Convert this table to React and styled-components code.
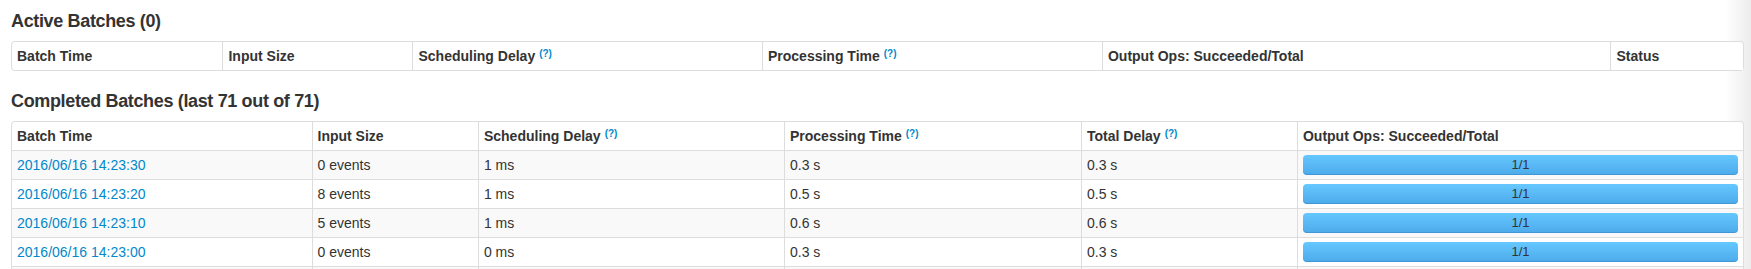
import React from 'react';
import styled, { createGlobalStyle } from 'styled-components';

const GlobalStyle = createGlobalStyle`
  html {
    overflow: hidden;
  }
  body {
    margin: 0;
    background: linear-gradient(to right, #fff calc(100% - 26px), #ececec 100%);
    font-family: "Liberation Sans", Arial, sans-serif;
    font-size: 14px;
    line-height: 20px;
    color: #333;
  }
`;

const activeCols = [
  { title: 'Batch Time', w: 12.21 },
  { title: 'Input Size', w: 10.97 },
  { title: 'Scheduling Delay', w: 20.18, tip: true },
  { title: 'Processing Time', w: 19.63, tip: true },
  { title: 'Output Ops: Succeeded/Total', w: 29.36 },
  { title: 'Status', w: 7.65 },
];

const completedCols = [
  { title: 'Batch Time', w: 17.35 },
  { title: 'Input Size', w: 9.61 },
  { title: 'Scheduling Delay', w: 17.67, tip: true },
  { title: 'Processing Time', w: 17.15, tip: true },
  { title: 'Total Delay', w: 12.47, tip: true },
  { title: 'Output Ops: Succeeded/Total', w: 25.75 },
];

const batches = [
  { time: '2016/06/16 14:23:30', input: '0 events', sched: '1 ms', proc: '0.3 s', total: '0.3 s', ops: '1/1' },
  { time: '2016/06/16 14:23:20', input: '8 events', sched: '1 ms', proc: '0.5 s', total: '0.5 s', ops: '1/1' },
  { time: '2016/06/16 14:23:10', input: '5 events', sched: '1 ms', proc: '0.6 s', total: '0.6 s', ops: '1/1' },
  { time: '2016/06/16 14:23:00', input: '0 events', sched: '0 ms', proc: '0.3 s', total: '0.3 s', ops: '1/1' },
  { time: '2016/06/16 14:22:50', input: '3 events', sched: '1 ms', proc: '0.4 s', total: '0.4 s', ops: '1/1' },
];

export default function App() {
  return (
    <Page>
      <GlobalStyle />
      <Heading>Active Batches (0)</Heading>
      <Table>
        <colgroup>
          {activeCols.map((c) => <Col key={c.title} $w={c.w} />)}
        </colgroup>
        <thead>
          <tr>
            {activeCols.map((c) => (
              <Th key={c.title}>
                {c.title}
                {c.tip && <Tip>(?)</Tip>}
              </Th>
            ))}
          </tr>
        </thead>
      </Table>

      <Heading>Completed Batches (last 71 out of 71)</Heading>
      <Table>
        <colgroup>
          {completedCols.map((c) => <Col key={c.title} $w={c.w} />)}
        </colgroup>
        <thead>
          <tr>
            {completedCols.map((c) => (
              <Th key={c.title}>
                {c.title}
                {c.tip && <Tip>(?)</Tip>}
              </Th>
            ))}
          </tr>
        </thead>
        <tbody>
          {batches.map((b) => (
            <tr key={b.time}>
              <Td><Link href="#">{b.time}</Link></Td>
              <Td>{b.input}</Td>
              <Td>{b.sched}</Td>
              <Td>{b.proc}</Td>
              <Td>{b.total}</Td>
              <Td>
                <Bar>{b.ops}</Bar>
              </Td>
            </tr>
          ))}
        </tbody>
      </Table>
    </Page>
  );
}

const Page = styled.div`
  padding: 11px 7px 0 11px;
`;

const Heading = styled.h4`
  margin: 0 0 10px;
  font-size: 18px;
  line-height: 20px;
  font-weight: bold;
  letter-spacing: -0.35px;
  color: #333;
`;

const Table = styled.table`
  width: 100%;
  table-layout: fixed;
  border-collapse: separate;
  border-spacing: 0;
  border: 1px solid #ddd;
  border-left: 0;
  border-radius: 4px;
  margin-bottom: 20px;

  tbody tr:nth-child(odd) td {
    background: #f9f9f9;
  }
  thead tr th:first-child {
    border-top-left-radius: 4px;
  }
  thead tr th:last-child {
    border-top-right-radius: 4px;
  }
  thead:last-child tr th:first-child,
  tbody tr:last-child td:first-child {
    border-bottom-left-radius: 4px;
  }
`;

const Col = styled.col`
  width: ${(p) => p.$w}%;
`;

const Th = styled.th`
  padding: 4px 5px;
  border-left: 1px solid #ddd;
  text-align: left;
  vertical-align: bottom;
  font-weight: bold;
  white-space: nowrap;
  overflow: hidden;
  background: #fff;
`;

const Td = styled.td`
  padding: 4px 5px;
  border-left: 1px solid #ddd;
  border-top: 1px solid #ddd;
  text-align: left;
  vertical-align: top;
  white-space: nowrap;
  overflow: hidden;
  background: #fff;
`;

const Tip = styled.sup`
  position: relative;
  top: -0.45em;
  margin-left: 4px;
  font-size: 10px;
  line-height: 0;
  vertical-align: baseline;
  color: #0088cc;
  font-weight: bold;
`;

const Link = styled.a`
  color: #0088cc;
  text-decoration: none;
`;

const Bar = styled.div`
  height: 20px;
  border-radius: 4px;
  background: linear-gradient(to bottom, #66c8ff, #4caaea);
  box-shadow: inset 0 -1px 0 rgba(0, 60, 120, 0.18);
  text-align: center;
  font-size: 13px;
  line-height: 20px;
  color: #333;
`;
